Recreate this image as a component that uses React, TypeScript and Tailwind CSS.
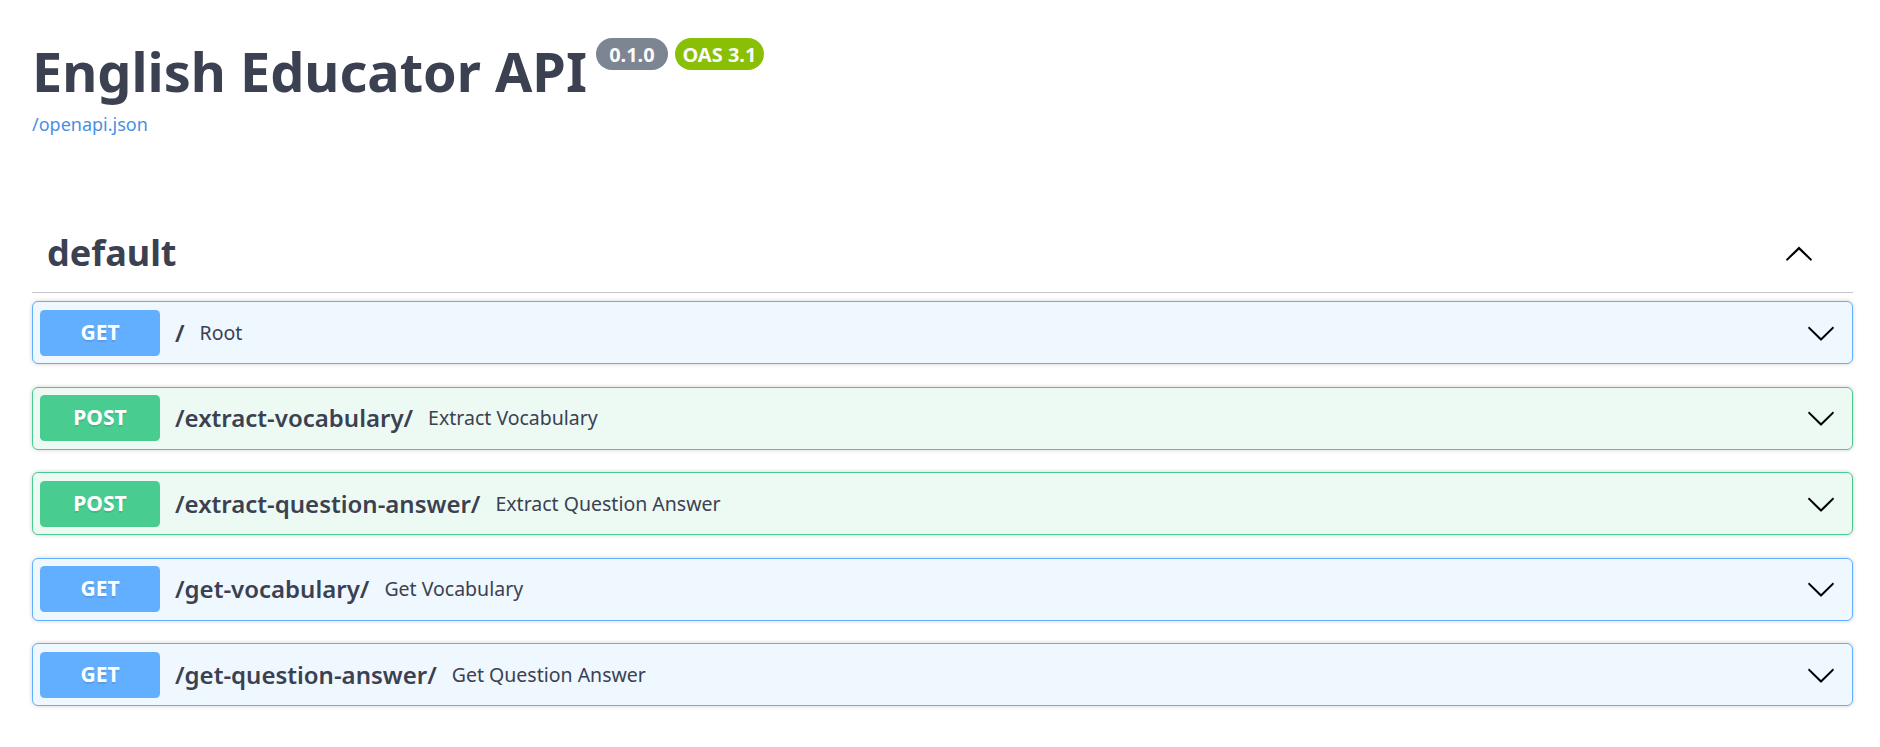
import React from "react";

const rows = [
  { method: "GET", path: "/", desc: "Root" },
  { method: "POST", path: "/extract-vocabulary/", desc: "Extract Vocabulary" },
  { method: "POST", path: "/extract-question-answer/", desc: "Extract Question Answer" },
  { method: "GET", path: "/get-vocabulary/", desc: "Get Vocabulary" },
  { method: "GET", path: "/get-question-answer/", desc: "Get Question Answer" },
];

function ArrowDown() {
  return (
    <svg width="30" height="30" viewBox="0 0 20 20" className="shrink-0 mr-[9px]">
      <path
        fill="#000"
        d="M17.418 6.109c.272-.268.709-.268.979 0s.271.701 0 .969l-7.908 7.83c-.27.268-.707.268-.979 0l-7.908-7.83c-.27-.268-.27-.701 0-.969.271-.268.709-.268.979 0L10 13.25l7.418-7.141z"
      />
    </svg>
  );
}

function ArrowUp() {
  return (
    <svg width="30" height="30" viewBox="0 0 20 20" className="shrink-0">
      <path
        fill="#000"
        d="M17.418 14.908c.272.268.709.268.979 0s.271-.701 0-.969l-7.908-7.83c-.27-.268-.707-.268-.979 0l-7.908 7.83c-.27.268-.27.701 0 .969.271.268.709.268.979 0L10 7.763l7.418 7.145z"
      />
    </svg>
  );
}

function Row({ method, path, desc }: { method: string; path: string; desc: string }) {
  const isGet = method === "GET";
  return (
    <div
      className={
        "flex items-center h-[63px] p-[7px] mb-[22.5px] border rounded-[6px] shadow-[0_0_4.5px_rgba(0,0,0,0.19)] " +
        (isGet ? "bg-[#eff7ff] border-[#61affe]" : "bg-[#edfaf4] border-[#49cc90]")
      }
    >
      <div
        className={
          "flex items-center justify-center w-[120px] h-[46px] rounded-[4.5px] text-white text-[21px] font-bold [text-shadow:0_1.5px_0_rgba(0,0,0,0.1)] shrink-0 " +
          (isGet ? "bg-[#61affe]" : "bg-[#49cc90]")
        }
      >
        {method}
      </div>
      <span className="px-[15px] text-[24px] font-semibold text-[#3b4151]">{path}</span>
      <span className="flex-1 text-[19.5px] text-[#3b4151]">{desc}</span>
      <ArrowDown />
    </div>
  );
}

export default function App() {
  return (
    <div className="min-h-[747px] bg-white pl-[32px] pr-[27px] font-['Noto_Sans',sans-serif] text-[#3b4151]">
      <div className="pt-[34px]">
        <div className="flex items-start">
          <h2 className="text-[54px] leading-[74px] font-bold text-[#3b4151]">English Educator API</h2>
          <span className="ml-[9px] mt-[4px] flex items-center justify-center w-[72px] h-[32px] rounded-full bg-[#7d8492] text-[20px] leading-[27px] font-bold text-[#fafafa]">
            0.1.0
          </span>
          <span className="ml-[7px] mt-[4px] flex items-center justify-center w-[89px] h-[32px] rounded-full bg-[#89bf04] text-[20px] leading-[27px] font-bold text-[#fafafa]">
            OAS 3.1
          </span>
        </div>
        <a className="block mt-[4px] text-[18px] leading-[25px] text-[#4990e2]">/openapi.json</a>
      </div>

      <div className="mt-[76px]">
        <div className="flex items-center pt-[15px] pb-[15px] pl-[15px] pr-[39px] border-b border-[#c4c6cb]">
          <h3 className="flex-1 text-[36px] leading-[49px] font-bold text-[#3b4151]">default</h3>
          <ArrowUp />
        </div>
        <div className="mt-[8px]">
          {rows.map((r) => (
            <Row key={r.path} {...r} />
          ))}
        </div>
      </div>
    </div>
  );
}
